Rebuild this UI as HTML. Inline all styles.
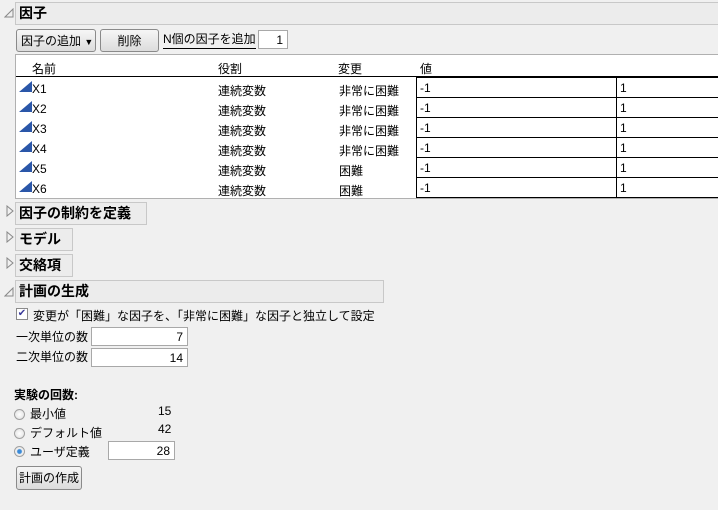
<!DOCTYPE html>
<html><head><meta charset="utf-8"><style>
body{margin:0;width:718px;height:510px;background:#f0f0f0;font-family:"Liberation Sans","Noto Sans CJK JP",sans-serif;font-size:12px;color:#000;position:relative;overflow:hidden}
.a{position:absolute;white-space:nowrap}
.hdr{position:absolute;background:#ececec;border:1px solid #c8c8c8;font-weight:bold;font-size:14px;line-height:20px;padding-left:3px;box-sizing:border-box}
.btn{position:absolute;border:1px solid #8a8a8a;border-radius:3px;background:linear-gradient(#f6f6f6,#dcdcdc);box-sizing:border-box;text-align:center;line-height:22px}
.inp{position:absolute;background:#fff;border:1px solid #a8a8a8;box-sizing:border-box;text-align:right;padding-right:4px;line-height:18px}
.cell{position:absolute;border:1px solid #000;background:#fff;box-sizing:border-box;padding-left:3px;line-height:21px}
.rad{position:absolute;width:11px;height:11px;border-radius:50%;border:1px solid #a0a0a0;background:radial-gradient(#fff,#ddd);box-sizing:border-box}
</style></head><body>
<svg class="a" style="left:4px;top:8px" width="10" height="10"><path d="M9 1 L9 9 L1 9 Z" fill="none" stroke="#888"/></svg>
<div class="hdr" style="left:15px;top:2px;width:705px;height:23px">因子</div>
<div class="btn" style="left:16px;top:29px;width:80px;height:23px;text-align:left;padding-left:4px">因子の追加 <span style="font-size:9px">▼</span></div>
<div class="btn" style="left:100px;top:29px;width:59px;height:23px">削除</div>
<div class="a" style="left:163px;top:30px;line-height:18px;border-bottom:1px solid #000">N個の因子を追加</div>
<div class="inp" style="left:258px;top:30px;width:30px;height:19px">1</div>
<div class="a" style="left:15px;top:54px;width:705px;height:145px;background:#fff;border:1px solid #b0b0b0;box-sizing:border-box"></div>
<div class="a" style="left:16px;top:76px;width:702px;height:1px;background:#000"></div>
<div class="a" style="left:32px;top:60px">名前</div>
<div class="a" style="left:218px;top:60px">役割</div>
<div class="a" style="left:338px;top:60px">変更</div>
<div class="a" style="left:420px;top:60px">値</div>
<div id="rows"></div>
<script>
var ch=["非常に困難","非常に困難","非常に困難","非常に困難","困難","困難"],h="";
for(var i=0;i<6;i++){var y=77+i*20;
h+='<svg class="a" style="left:19px;top:'+(y+4)+'px" width="13" height="11"><path d="M0 11 L13 0 L13 11 Z" fill="#2a56a8"/></svg>';
h+='<div class="a" style="left:32px;top:'+(y+5)+'px">X'+(i+1)+'</div>';
h+='<div class="a" style="left:218px;top:'+(y+5)+'px">連続変数</div>';
h+='<div class="a" style="left:339px;top:'+(y+5)+'px">'+ch[i]+'</div>';
h+='<div class="cell" style="left:416px;top:'+y+'px;width:201px;height:21px">-1</div>';
h+='<div class="cell" style="left:616px;top:'+y+'px;width:110px;height:21px">1</div>';}
document.getElementById('rows').innerHTML=h;
</script>
<svg class="a" style="left:6px;top:205px" width="8" height="12"><path d="M1 1 L7 6 L1 11 Z" fill="none" stroke="#888"/></svg>
<div class="hdr" style="left:15px;top:202px;width:132px;height:23px">因子の制約を定義</div>
<svg class="a" style="left:6px;top:231px" width="8" height="12"><path d="M1 1 L7 6 L1 11 Z" fill="none" stroke="#888"/></svg>
<div class="hdr" style="left:15px;top:228px;width:58px;height:23px">モデル</div>
<svg class="a" style="left:6px;top:257px" width="8" height="12"><path d="M1 1 L7 6 L1 11 Z" fill="none" stroke="#888"/></svg>
<div class="hdr" style="left:15px;top:254px;width:58px;height:23px">交絡項</div>
<svg class="a" style="left:4px;top:287px" width="10" height="10"><path d="M9 1 L9 9 L1 9 Z" fill="none" stroke="#888"/></svg>
<div class="hdr" style="left:15px;top:280px;width:369px;height:23px">計画の生成</div>
<div class="a" style="left:16px;top:308px;width:12px;height:12px;border:1px solid #8a8a8a;background:#fff;box-sizing:border-box;font-size:10px;line-height:10px;text-align:center;color:#3a3a9a">✔</div>
<div class="a" style="left:33px;top:307px">変更が「困難」な因子を、「非常に困難」な因子と独立して設定</div>
<div class="a" style="left:16px;top:328px">一次単位の数</div>
<div class="inp" style="left:91px;top:327px;width:97px;height:19px">7</div>
<div class="a" style="left:16px;top:348px">二次単位の数</div>
<div class="inp" style="left:91px;top:348px;width:97px;height:19px">14</div>
<div class="a" style="left:14px;top:386px;font-weight:bold">実験の回数:</div>
<div class="rad" style="left:14px;top:409px"></div>
<div class="a" style="left:30px;top:405px">最小値</div>
<div class="a" style="left:158px;top:404px">15</div>
<div class="rad" style="left:14px;top:428px"></div>
<div class="a" style="left:30px;top:424px">デフォルト値</div>
<div class="a" style="left:158px;top:422px">42</div>
<div class="rad" style="left:14px;top:446px;background:radial-gradient(#3a8ad8 30%,#eee 45%)"></div>
<div class="a" style="left:30px;top:443px">ユーザ定義</div>
<div class="inp" style="left:108px;top:441px;width:67px;height:19px">28</div>
<div class="btn" style="left:16px;top:466px;width:66px;height:24px">計画の作成</div>
</body></html>
